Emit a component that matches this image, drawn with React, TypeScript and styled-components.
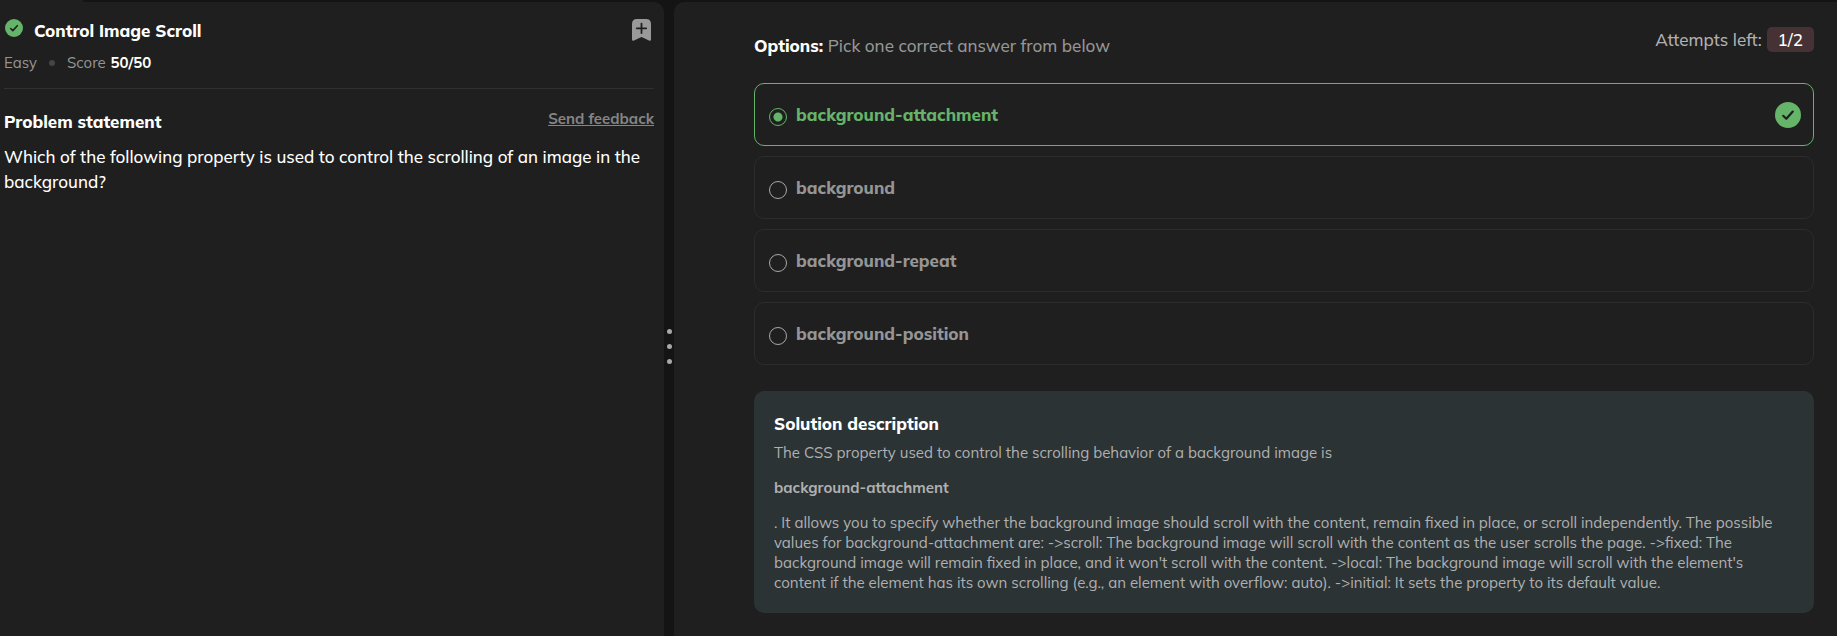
import React, { useState } from 'react';
import styled, { createGlobalStyle } from 'styled-components';

const color = {
  page: '#141414',
  panel: '#1f1f1f',
  line: '#303030',
  white: '#ffffff',
  grey: '#959595',
  soft: '#b0b0b0',
  green: '#66b36a',
  solution: '#2b3335',
  attempts: '#463234',
};

const GlobalStyle = createGlobalStyle`
  * { box-sizing: border-box; }
  body {
    margin: 0;
    background: ${color.page};
    color: ${color.white};
    font-family: Mulish, "Open Sans", sans-serif;
    font-size: 17px;
    font-weight: 500;
    line-height: 25px;
  }
  h1, h2, p { margin: 0; }
`;

const Page = styled.div`
  display: flex;
  flex-direction: column;
  min-height: 100vh;
`;

const TabStrip = styled.div`
  height: 2px;
  background: linear-gradient(${color.panel}, ${color.panel}) left / 83px 2px no-repeat;
`;

const Split = styled.div`
  flex: 1;
  display: grid;
  grid-template-columns: minmax(0, 664fr) 10px minmax(0, 1163fr);
`;

const ProblemPanel = styled.section`
  padding: 16px 10px 20px 4px;
  background: ${color.panel};
  border-top-right-radius: 10px;
`;

const AnswerPanel = styled.main`
  padding: 25px 23px 23px 80px;
  background: ${color.panel};
  border-top-left-radius: 10px;
`;

const Resizer = styled.div`
  display: flex;
  flex-direction: column;
  align-items: center;
  justify-content: center;
  gap: 10px;
  padding-top: 54px;
  cursor: col-resize;
`;

const Grip = styled.span`
  width: 5px;
  height: 5px;
  border-radius: 50%;
  background: #a8a8a8;
`;

const Heading = styled.h2`
  font-size: 17px;
  line-height: 25px;
  font-weight: 800;
`;

const TitleRow = styled.header`
  display: flex;
  align-items: flex-start;
  gap: 10px;
`;

const StatusIcon = styled.span`
  display: flex;
  padding: 1px;
`;

const BookmarkButton = styled.button`
  display: flex;
  margin-left: auto;
  padding: 1px 3px;
  border: 0;
  background: none;
  cursor: pointer;
`;

const Meta = styled.div`
  display: flex;
  align-items: center;
  gap: 12px;
  margin-top: 10px;
  padding-bottom: 15px;
  border-bottom: 1px solid ${color.line};
  font-size: 15px;
  font-weight: 400;
  line-height: 20px;
  color: ${color.grey};

  strong {
    margin-left: 1px;
    color: ${color.white};
    font-weight: 700;
  }
`;

const Dot = styled.span`
  width: 6px;
  height: 6px;
  border-radius: 50%;
  background: #454545;
`;

const StatementHead = styled.div`
  display: flex;
  align-items: flex-start;
  justify-content: space-between;
  margin: 20px 0 10px;
`;

const FeedbackLink = styled.a`
  font-size: 15px;
  line-height: 20px;
  font-weight: 700;
  color: #858585;
  text-decoration: underline;
`;

const AnswerHead = styled.div`
  display: flex;
  align-items: flex-start;
  justify-content: space-between;
  margin-bottom: 25px;
`;

const Prompt = styled.p`
  padding-top: 6px;
  color: ${color.grey};

  strong {
    font-weight: 800;
    color: ${color.white};
  }
`;

const Attempts = styled.p`
  display: flex;
  align-items: center;
  gap: 5px;
  color: ${color.soft};
`;

const AttemptsBadge = styled.span`
  padding: 0 11px;
  border-radius: 5px;
  background: ${color.attempts};
  color: ${color.white};
`;

const OptionList = styled.div`
  display: flex;
  flex-direction: column;
  gap: 10px;
`;

const Option = styled.label<{ $correct: boolean }>`
  display: flex;
  align-items: center;
  gap: 9px;
  height: 63px;
  padding: 0 12px 0 14px;
  border: 1px solid ${(p) => (p.$correct ? color.green : '#2c2c2c')};
  border-radius: 10px;
  color: ${(p) => (p.$correct ? color.green : color.grey)};
  font-weight: 800;
  cursor: pointer;

  svg { margin-left: auto; }
`;

const Radio = styled.input`
  appearance: none;
  width: 18px;
  height: 18px;
  margin: 5px 0 0;
  border: 1px solid #a8a8a8;
  border-radius: 50%;

  &:checked {
    border-color: ${color.green};
    background: radial-gradient(circle, ${color.green} 4px, transparent 5px);
  }
`;

const Solution = styled.section`
  display: flex;
  flex-direction: column;
  gap: 15px;
  margin-top: 26px;
  padding: 20px;
  border-radius: 10px;
  background: ${color.solution};
  color: ${color.soft};
  font-size: 15px;
  font-weight: 400;
  line-height: 20px;

  h2 {
    margin-bottom: 7px;
    color: ${color.white};
  }

  strong { font-weight: 700; }
`;

function CheckBadge({ size }: { size: number }) {
  return (
    <svg width={size} height={size} viewBox="0 0 26 26" aria-hidden="true">
      <circle cx="13" cy="13" r="13" fill={color.green} />
      <path d="M8.2 13.8 L11.3 16.8 L17.8 9.6" fill="none" stroke={color.panel} strokeWidth="2.2" strokeLinecap="round" strokeLinejoin="round" />
    </svg>
  );
}

function BookmarkIcon() {
  return (
    <svg width="19" height="22" viewBox="0 0 19 22" aria-hidden="true">
      <path d="M5 0 H14 Q19 0 19 5 V20.4 Q19 22.4 17 21.6 L9.5 18 L2 21.6 Q0 22.4 0 20.4 V5 Q0 0 5 0 Z" fill="#999999" />
      <path d="M9.5 4.6 V14 M4.8 9.3 H14.2" stroke={color.panel} strokeWidth="1.8" strokeLinecap="round" />
    </svg>
  );
}

const options = ['background-attachment', 'background', 'background-repeat', 'background-position'];
const answer = 'background-attachment';

export default function App() {
  const [picked, setPicked] = useState(answer);

  return (
    <Page>
      <GlobalStyle />
      <TabStrip />
      <Split>
        <ProblemPanel>
          <TitleRow>
            <StatusIcon><CheckBadge size={18} /></StatusIcon>
            <Heading as="h1">Control Image Scroll</Heading>
            <BookmarkButton type="button" aria-label="Bookmark problem"><BookmarkIcon /></BookmarkButton>
          </TitleRow>
          <Meta>
            <span>Easy</span>
            <Dot />
            <span>Score <strong>50/50</strong></span>
          </Meta>
          <StatementHead>
            <Heading>Problem statement</Heading>
            <FeedbackLink href="#feedback">Send feedback</FeedbackLink>
          </StatementHead>
          <p>Which of the following property is used to control the scrolling of an image in the background?</p>
        </ProblemPanel>
        <Resizer role="separator" aria-orientation="vertical">
          <Grip />
          <Grip />
          <Grip />
        </Resizer>
        <AnswerPanel>
          <AnswerHead>
            <Prompt><strong>Options:</strong> Pick one correct answer from below</Prompt>
            <Attempts>Attempts left: <AttemptsBadge>1/2</AttemptsBadge></Attempts>
          </AnswerHead>
          <OptionList role="radiogroup" aria-label="Options">
            {options.map((option) => (
              <Option key={option} $correct={option === answer}>
                <Radio type="radio" name="option" value={option} checked={picked === option} onChange={() => setPicked(option)} />
                {option}
                {option === answer && <CheckBadge size={26} />}
              </Option>
            ))}
          </OptionList>
          <Solution>
            <div>
              <Heading>Solution description</Heading>
              <p>The CSS property used to control the scrolling behavior of a background image is</p>
            </div>
            <strong>background-attachment</strong>
            <p>
              . It allows you to specify whether the background image should scroll with the content, remain fixed in
              place, or scroll independently. The possible values for background-attachment are: -&gt;scroll: The
              background image will scroll with the content as the user scrolls the page. -&gt;fixed: The background
              image will remain fixed in place, and it won't scroll with the content. -&gt;local: The background image
              will scroll with the element's content if the element has its own scrolling (e.g., an element with
              overflow: auto). -&gt;initial: It sets the property to its default value.
            </p>
          </Solution>
        </AnswerPanel>
      </Split>
    </Page>
  );
}
